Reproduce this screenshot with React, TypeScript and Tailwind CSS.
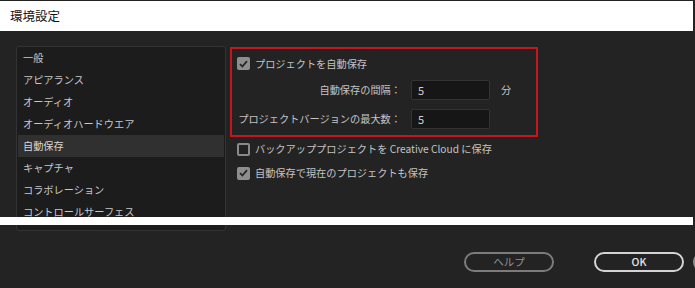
import React from "react";

const categories = [
  "一般",
  "アピアランス",
  "オーディオ",
  "オーディオハードウエア",
  "自動保存",
  "キャプチャ",
  "コラボレーション",
  "コントロールサーフェス",
];

const Checkbox = ({ checked }: { checked: boolean }) =>
  checked ? (
    <span className="flex h-[13px] w-[13px] shrink-0 items-center justify-center rounded-[2px] bg-[#8e8e8e]">
      <svg width="9" height="8" viewBox="0 0 9 8">
        <path d="M1 4.2 L3.4 6.5 L8 1.2" fill="none" stroke="#262626" strokeWidth="1.8" />
      </svg>
    </span>
  ) : (
    <span className="h-[13px] w-[13px] shrink-0 rounded-[2px] border-2 border-[#8a8a8a]" />
  );

const NumberField = ({ value }: { value: string }) => (
  <div className="flex h-[20px] w-[79px] items-center rounded-[2px] border border-[#333] bg-[#161616] pl-[6px] text-[11px] text-[#cfcfcf]">
    {value}
  </div>
);

export default function App() {
  return (
    <div
      className="relative h-[288px] w-[695px] overflow-hidden whitespace-nowrap bg-[#232323] text-[10.2px] text-[#c4c4c4]"
      style={{ fontFamily: '"Noto Sans CJK JP", "Noto Sans", sans-serif' }}
    >
      <div className="mt-px flex h-[30px] w-[693px] items-center bg-white pl-[10px] text-[12.5px] text-[#111]">
        環境設定
      </div>

      <div className="flex pl-4 pt-[15px]">
        <div className="h-[185px] w-[210px] overflow-hidden rounded-[3px] border border-[#333] bg-[#1c1c1c] px-px">
          {categories.map((c) => (
            <div
              key={c}
              className={`flex h-[22px] items-center pl-[5px] ${
                c === "自動保存" ? "bg-[#303030] text-[#d6d6d6]" : "text-[#c8c8c8]"
              }`}
            >
              {c}
            </div>
          ))}
        </div>

        <div className="ml-[4px] flex flex-col pt-px">
          <div className="flex h-[90px] w-[308px] flex-col border-2 border-[#c4161c] pl-[5px] pt-[6px]">
            <div className="flex h-[17px] items-center gap-[5px]">
              <Checkbox checked />
              <span>プロジェクトを自動保存</span>
            </div>
            <div className="mt-[8px] flex items-center">
              <span className="w-[164px] text-right">自動保存の間隔：</span>
              <span className="ml-[10px]">
                <NumberField value="5" />
              </span>
              <span className="ml-[11px]">分</span>
            </div>
            <div className="mt-[9px] flex items-center">
              <span className="w-[164px] text-right">プロジェクトバージョンの最大数：</span>
              <span className="ml-[10px]">
                <NumberField value="5" />
              </span>
            </div>
          </div>

          <div className="mt-[5px] flex h-[14px] items-center gap-[5px] pl-[7px]">
            <Checkbox checked={false} />
            <span>バックアッププロジェクトを Creative Cloud に保存</span>
          </div>
          <div className="mt-[10px] flex h-[14px] items-center gap-[5px] pl-[7px]">
            <Checkbox checked />
            <span>自動保存で現在のプロジェクトも保存</span>
          </div>
        </div>
      </div>

      <div className="absolute left-0 top-[217px] h-[8px] w-[693px] bg-white" />

      <div className="mt-[21px] flex pl-[464px]">
        <button className="h-[20px] w-[90px] shrink-0 rounded-full border-2 border-[#7c7c7c] text-[10.5px] text-[#8f8f8f]">
          ヘルプ
        </button>
        <button className="ml-[40px] h-[20px] w-[90px] shrink-0 rounded-full border-2 border-[#d4d4d4] text-[10.5px] font-medium text-[#e6e6e6]">
          OK
        </button>
        <div className="ml-[9px] h-[20px] w-[90px] shrink-0 rounded-full border-2 border-[#8a8a8a]" />
      </div>
    </div>
  );
}
